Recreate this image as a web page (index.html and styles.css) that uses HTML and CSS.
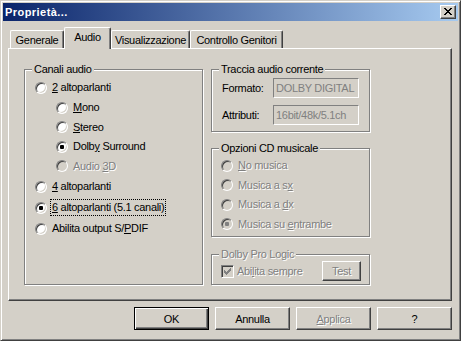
FILE: index.html
```html
<!DOCTYPE html>
<html lang="it">
<head>
  <meta charset="UTF-8" />
  <title>Proprietà...</title>
  <link rel="stylesheet" href="styles.css">
</head>
<body>
  <div class="window">
    <div class="titlebar">
      <span class="title">Proprietà...</span>
      <div class="close">
        <svg width="8" height="7" viewBox="0 0 8 7" shape-rendering="crispEdges"><path fill="#000" d="M0 0h2v1H0zM6 0h2v1H6zM1 1h2v1H1zM5 1h2v1H5zM2 2h4v1H2zM3 3h2v1H3zM2 4h4v1H2zM1 5h2v1H1zM5 5h2v1H5zM0 6h2v1H0zM6 6h2v1H6z"/></svg>
      </div>
    </div>

    <div class="content">
      <div class="tabs">
        <div class="tab t-gen">Generale</div>
        <div class="tab active t-audio">Audio</div>
        <div class="tab t-vis">Visualizzazione</div>
        <div class="tab t-ctl">Controllo Genitori</div>
      </div>

      <div class="panel">
        <div class="group g-channels">
          <div class="group-title">Canali audio</div>
          <div class="opt"><span class="radio"></span><span class="lbl"><u>2</u> altoparlanti</span></div>
          <div class="opt sub"><span class="radio"></span><span class="lbl"><u>M</u>ono</span></div>
          <div class="opt sub"><span class="radio"></span><span class="lbl"><u>S</u>tereo</span></div>
          <div class="opt sub"><span class="radio on"></span><span class="lbl">Dolb<u>y</u> Surround</span></div>
          <div class="opt sub"><span class="radio dis"></span><span class="lbl dis">Audio <u>3</u>D</span></div>
          <div class="opt"><span class="radio"></span><span class="lbl"><u>4</u> altoparlanti</span></div>
          <div class="opt"><span class="radio on"></span><span class="lbl focus"><u>6</u> altoparlanti (5.1 canali)</span></div>
          <div class="opt"><span class="radio"></span><span class="lbl">Abilita output S/<u>P</u>DIF</span></div>
        </div>

        <div class="col">
          <div class="group g-track">
            <div class="group-title">Traccia audio corrente</div>
            <div class="field-row"><span class="field-label">Formato:</span><div class="field">DOLBY DIGITAL</div></div>
            <div class="field-row"><span class="field-label">Attributi:</span><div class="field">16bit/48k/5.1ch</div></div>
          </div>

          <div class="group g-cd">
            <div class="group-title">Opzioni CD musicale</div>
            <div class="opt"><span class="radio dis"></span><span class="lbl dis"><u>N</u>o musica</span></div>
            <div class="opt"><span class="radio dis"></span><span class="lbl dis">Musica a s<u>x</u></span></div>
            <div class="opt"><span class="radio dis"></span><span class="lbl dis">Musica a <u>d</u>x</span></div>
            <div class="opt"><span class="radio dis on"></span><span class="lbl dis">Musica su <u>e</u>ntrambe</span></div>
          </div>

          <div class="group g-dolby">
            <div class="group-title dis">Dolby Pro Logic</div>
            <div class="check-row">
              <span class="check">
                <svg width="7" height="7" viewBox="0 0 7 7" shape-rendering="crispEdges"><path fill="#808080" d="M6 0h1v1H6zM5 1h2v1H5zM0 2h1v1H0zM4 2h3v1H4zM0 3h2v1H0zM3 3h3v1H3zM0 4h5v1H0zM1 5h3v1H1zM2 6h1v1H2z"/></svg>
              </span>
              <span class="lbl dis">Abi<u>l</u>ita sempre</span>
              <button type="button" class="btn btn-test dis">Test</button>
            </div>
          </div>
        </div>
      </div>

      <div class="buttons">
        <button type="button" class="btn default">OK</button>
        <button type="button" class="btn">Annulla</button>
        <button type="button" class="btn dis"><span><u>A</u>pplica</span></button>
        <button type="button" class="btn">?</button>
      </div>
    </div>
  </div>
</body>
</html>
```

FILE: styles.css
```css
* {
  margin: 0;
  padding: 0;
  box-sizing: border-box;
}

body {
  font-family: "Liberation Sans", Arial, sans-serif;
  font-size: 11px;
  letter-spacing: -0.3px;
  color: #000;
  background: #d4d0c8;
}

.window {
  width: 461px;
  height: 341px;
  background: #d4d0c8;
  border: 1px solid;
  border-color: #d4d0c8 #404040 #404040 #d4d0c8;
  box-shadow: inset 1px 1px 0 #fff, inset -1px -1px 0 #808080;
  padding: 2px;
}

/* title bar */
.titlebar {
  height: 18px;
  display: flex;
  align-items: center;
  justify-content: space-between;
  background: linear-gradient(to right, #0a246a, #a6caf0);
  color: #fff;
}

.title {
  font-weight: bold;
  letter-spacing: 0.45px;
  padding-left: 2px;
}

.close {
  width: 16px;
  height: 14px;
  margin-right: 2px;
  background: #d4d0c8;
  border: 1px solid;
  border-color: #fff #404040 #404040 #fff;
  box-shadow: inset -1px -1px 0 #808080;
  display: flex;
  align-items: center;
  justify-content: center;
  padding: 0 1px 1px 0;
}

.close svg {
  display: block;
}

.content {
  padding: 6px 6px 0 5px;
}

/* tabs */
.tabs {
  display: flex;
  align-items: flex-end;
  height: 21px;
  padding-left: 2px;
}

.tab {
  height: 18px;
  text-align: center;
  padding-top: 3px;
  line-height: 13px;
  background: #d4d0c8;
  border: 1px solid;
  border-bottom: 0;
  border-color: #fff #404040 #404040 #fff;
  border-radius: 2px 2px 0 0;
  box-shadow: inset -1px 0 0 #808080;
}

.tab.active {
  height: 22px;
  margin-bottom: -1px;
  position: relative;
  z-index: 1;
}

.t-gen { width: 54px; }
.t-audio { width: 47px; }
.t-vis { width: 79px; }
.t-ctl { width: 93px; }

.panel {
  height: 253px;
  border: 1px solid;
  border-color: #fff #404040 #404040 #fff;
  box-shadow: inset -1px -1px 0 #808080;
  padding: 20px 0 0 15px;
  display: flex;
  gap: 8px;
}

/* group boxes */
.group {
  position: relative;
  border: 1px solid #808080;
  box-shadow: inset 1px 1px 0 #fff, 1px 1px 0 #fff;
}

.group-title {
  position: absolute;
  top: -7px;
  left: 7px;
  padding: 0 2px;
  line-height: 13px;
  background: #d4d0c8;
  white-space: nowrap;
}

.g-channels {
  width: 179px;
  height: 216px;
  padding: 7px 0 0 10px;
}

.opt {
  display: flex;
  align-items: center;
  height: 21px;
  white-space: nowrap;
}

.opt.sub {
  height: 19.5px;
  padding-left: 21px;
}

.radio {
  flex: none;
  position: relative;
  width: 12px;
  height: 12px;
  margin-right: 3px;
  border-radius: 50%;
  background: #fff;
  border: 1px solid;
  border-color: #808080 #fff #fff #808080;
  box-shadow: inset 1px 1px 0 #404040, inset -1px -1px 0 #d4d0c8;
}

.radio.dis {
  background: #d4d0c8;
}

.radio.on::after {
  content: "";
  position: absolute;
  left: 3px;
  top: 3px;
  width: 4px;
  height: 4px;
  border-radius: 1px;
  background: #000;
}

.radio.dis.on::after {
  background: #808080;
}

.lbl {
  padding: 0 2px;
  line-height: 17px;
}

.focus {
  outline: 1px dotted #000;
  outline-offset: -1px;
}

.dis {
  color: #808080;
  text-shadow: 1px 1px 0 #fff;
}

/* right column */
.col {
  display: flex;
  flex-direction: column;
  width: 159px;
}

.g-track {
  height: 63px;
  padding: 8px 0 0 10px;
}

.field-row {
  display: flex;
  align-items: center;
  height: 20px;
}

.field-row + .field-row {
  margin-top: 7px;
}

.field-label {
  width: 51px;
}

.field {
  width: 86px;
  height: 20px;
  padding-left: 2px;
  line-height: 18px;
  color: #808080;
  border: 1px solid;
  border-color: #808080 #fff #fff #808080;
  white-space: nowrap;
  overflow: hidden;
}

.g-cd {
  height: 89px;
  margin-top: 16px;
  padding: 7px 0 0 9px;
}

.g-cd .opt {
  height: 19.5px;
}

.g-dolby {
  height: 31px;
  margin-top: 17px;
  padding: 6px 8px 0 9px;
}

.check-row {
  display: flex;
  align-items: center;
  height: 20px;
}

.check {
  flex: none;
  width: 13px;
  height: 13px;
  margin-right: 1px;
  display: flex;
  align-items: center;
  justify-content: center;
  background: #d4d0c8;
  border: 1px solid;
  border-color: #808080 #fff #fff #808080;
  box-shadow: inset 1px 1px 0 #404040, inset -1px -1px 0 #d4d0c8;
}

.check svg {
  display: block;
}

/* push buttons */
.btn {
  width: 75px;
  height: 23px;
  padding: 0;
  font: inherit;
  letter-spacing: inherit;
  color: #000;
  background: #d4d0c8;
  border: 1px solid;
  border-color: #fff #404040 #404040 #fff;
  box-shadow: inset -1px -1px 0 #808080;
  display: flex;
  align-items: center;
  justify-content: center;
}

.btn.dis {
  color: #808080;
}

.btn.default {
  border-color: #000;
  box-shadow: inset 1px 1px 0 #fff, inset -1px -1px 0 #404040, inset -2px -2px 0 #808080;
}

.btn-test {
  width: 39px;
  height: 20px;
  margin-left: auto;
}

.buttons {
  display: flex;
  justify-content: flex-end;
  gap: 6px;
  margin-top: 6px;
}
```
